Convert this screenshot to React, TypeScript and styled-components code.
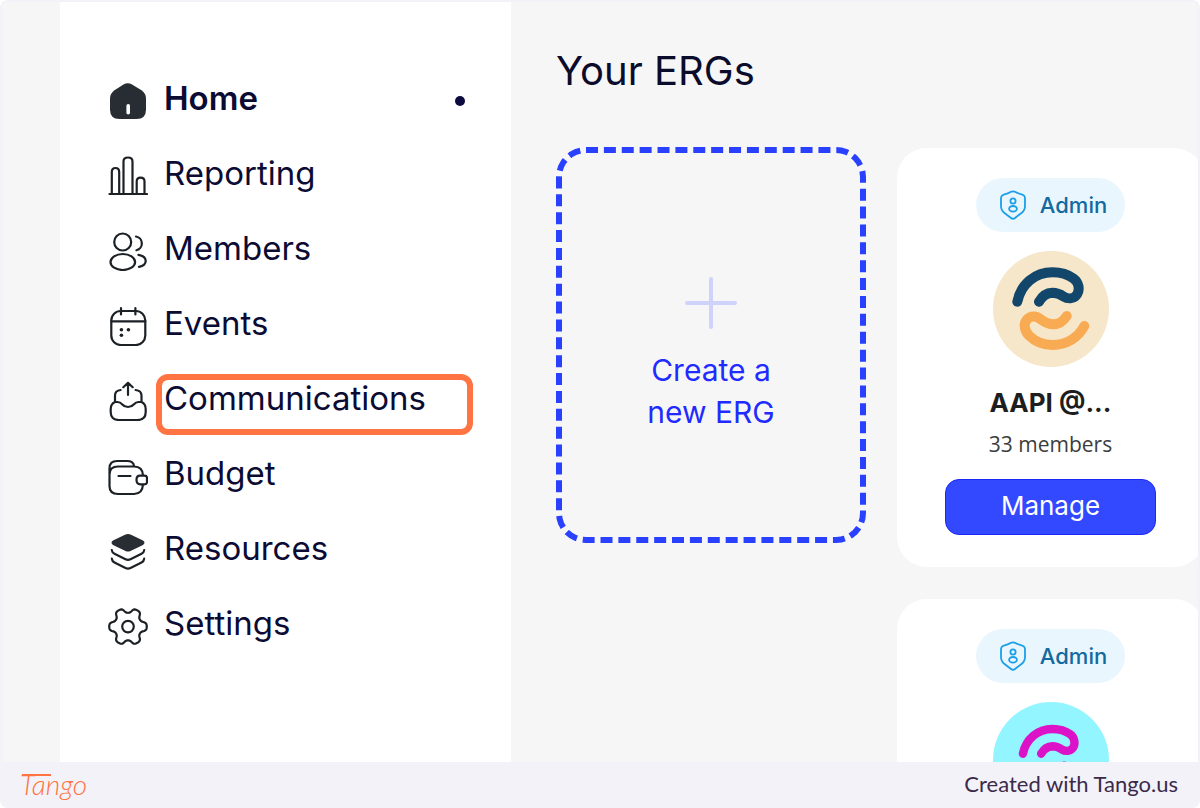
import React from "react";
import styled, { createGlobalStyle } from "styled-components";

const GlobalStyle = createGlobalStyle`
  *, *::before, *::after { box-sizing: border-box; }
  body { margin: 0; background: #ffffff; font-family: Inter, "Liberation Sans", sans-serif; }
  h1, h2, p, ul { margin: 0; padding: 0; font-weight: inherit; }
`;

const Frame = styled.div`
  display: flex;
  flex-direction: column;
  height: 100vh;
  min-height: 320px;
  border: 2px solid #f3f2f8;
  border-bottom: 0;
  border-radius: 8px;
  overflow: hidden;
  background: #f3f2f8;
`;

const Screen = styled.div`
  flex: 1;
  min-height: 0;
  display: flex;
  overflow: hidden;
  background: #f6f6f6;
  padding-left: 58px;
`;

const Sidebar = styled.nav`
  flex: 0 0 451px;
  background: #ffffff;
  padding: 62px 46px 0 48px;
`;

const NavList = styled.ul`
  list-style: none;
`;

const NavItem = styled.li`
  height: 75px;
  padding-top: 17px;
`;

const NavLink = styled.a<{ $active?: boolean }>`
  display: flex;
  align-items: center;
  gap: 16px;
  height: 40px;
  color: #0b0b33;
  font-size: 33px;
  line-height: 34px;
  font-weight: ${(p) => (p.$active ? 600 : 400)};
  text-decoration: none;
`;

const NavIcon = styled.svg`
  flex: none;
  width: 40px;
  height: 40px;
  fill: none;
  stroke: #1c2126;
  stroke-width: 2.2;
  stroke-linecap: round;
  stroke-linejoin: round;
`;

const NavLabel = styled.span`
  position: relative;
  flex: 1;
  padding-bottom: 6px;
`;

const Highlight = styled.span`
  position: absolute;
  inset: -7px -8px -14px -8px;
  border: 6px solid #ff7442;
  border-radius: 12px;
`;

const ActiveDot = styled.span`
  width: 10px;
  height: 10px;
  border-radius: 50%;
  background: #0b0b40;
`;

const Main = styled.main`
  flex: 1;
  min-width: 0;
  padding: 45px 0 0 45px;
  overflow: hidden;
`;

const Title = styled.h1`
  color: #0b0b2b;
  font-size: 40px;
  line-height: 48px;
`;

const Board = styled.div`
  display: grid;
  grid-template-columns: 310px 307px;
  align-items: start;
  gap: 31px;
  margin-top: 52px;
`;

const CreateCard = styled.button`
  display: flex;
  flex-direction: column;
  align-items: center;
  justify-content: center;
  gap: 20px;
  height: 396px;
  padding: 20px 0 0;
  border: 6px dashed #2940ff;
  border-radius: 30px;
  background: transparent;
  color: #1f2bff;
  font-family: inherit;
  font-size: 30px;
  line-height: 42px;
`;

const PlusIcon = styled.svg`
  width: 52px;
  height: 52px;
  fill: none;
  stroke: #cfd2fb;
  stroke-width: 4;
  stroke-linecap: round;
`;

const CardColumn = styled.div`
  display: flex;
  flex-direction: column;
  gap: 32px;
  padding-top: 1px;
`;

const Card = styled.section`
  display: flex;
  flex-direction: column;
  align-items: center;
  padding: 30px 0 32px;
  border-radius: 30px;
  background: #ffffff;
`;

const Badge = styled.span`
  display: flex;
  align-items: center;
  gap: 14px;
  height: 54px;
  padding: 0 18px 0 24px;
  border-radius: 27px;
  background: #eaf6fe;
  color: #136a9f;
  font-size: 22px;
  font-weight: 500;
  line-height: 28px;
`;

const ShieldSvg = styled.svg`
  width: 26px;
  height: 30px;
  fill: none;
  stroke: #1a9fe8;
  stroke-width: 1.8;
`;

const Avatar = styled.svg`
  width: 116px;
  height: 116px;
  margin-top: 19px;
  fill: none;
  stroke-width: 10;
  stroke-linecap: round;
  stroke-linejoin: round;
`;

const CardTitle = styled.h2`
  margin-top: 20px;
  color: #1e1e1e;
  font-size: 26px;
  font-weight: 700;
  line-height: 32px;
`;

const CardMeta = styled.p`
  margin-top: 11px;
  color: #3d3d3d;
  font-family: "Open Sans", sans-serif;
  font-size: 21px;
  line-height: 28px;
`;

const ManageButton = styled.button`
  width: 211px;
  height: 56px;
  margin-top: 21px;
  padding: 0 0 2px;
  border: 1px solid #1c28f5;
  border-radius: 14px;
  background: #3349ff;
  color: #ffffff;
  font-family: inherit;
  font-size: 26px;
  line-height: 32px;
`;

const Footer = styled.footer`
  flex: none;
  display: flex;
  align-items: center;
  justify-content: space-between;
  height: 46px;
  padding: 0 20px 2px 18px;
  background: #f3f2f8;
  color: #3b2a4a;
  font-family: Lato, sans-serif;
  font-size: 22px;
  line-height: 28px;
`;

const Brand = styled.a`
  position: relative;
  color: #ff7442;
  font-size: 28px;
  font-style: italic;
  font-weight: 300;
  text-decoration: none;

  &::before {
    content: "";
    position: absolute;
    top: 4px;
    left: 2px;
    width: 29px;
    height: 2px;
    background: currentColor;
  }
`;

/* Six soft teeth around the hub, one pointing right. */
const gearPath =
  Array.from({ length: 120 }, (_, i) => {
    const a = (i / 120) * Math.PI * 2;
    const r = 16.2 + 2.7 * Math.tanh(1.6 * Math.cos(6 * a) + 0.2);
    const x = (20 + r * Math.cos(a)).toFixed(2);
    const y = (20.6 + r * Math.sin(a)).toFixed(2);
    return `${i ? "L" : "M"}${x} ${y}`;
  }).join("") + "Z";

type Item = { label: string; icon: React.ReactNode; active?: boolean; marked?: boolean };

const items: Item[] = [
  {
    label: "Home",
    active: true,
    icon: (
      <>
        <path
          fill="#272d33"
          stroke="none"
          d="M15.5 3.4Q19.8 1 24 3.4L33.5 9.3Q38 12.5 38 17.5V28.5Q38 38 28.5 38H11.5Q2 38 2 28.5V17.5Q2 12.5 6.5 9.3Z"
        />
        <rect x="18.4" y="23" width="3.6" height="10.6" rx="1.8" fill="#fff" stroke="none" />
      </>
    ),
  },
  {
    label: "Reporting",
    icon: (
      <path d="M1.5 38H39M3.8 38V16Q3.8 12 7.5 12T11.2 16V38M15.5 38V5.5Q15.5 1.5 20 1.5T24.5 5.5V38M28.7 38V25.5Q28.7 21.7 32.6 21.7T36.5 25.5V38" />
    ),
  },
  {
    label: "Members",
    icon: (
      <>
        <circle cx="14.7" cy="11" r="8.5" />
        <ellipse cx="14.8" cy="31" rx="12.3" ry="8" />
        <path d="M28 5.5A7 7 0 0 1 28.5 19.2M30.5 23.8C40 25.5 40 34 31 35.8" />
      </>
    ),
  },
  {
    label: "Events",
    icon: (
      <>
        <rect x="3.3" y="5" width="34" height="34" rx="9.5" />
        <path d="M3.3 15.3H37.3M13 2V8.5M27.4 2V8.5" />
        <g fill="#1c2126" stroke="none">
          <circle cx="13.4" cy="23.7" r="1.8" />
          <circle cx="20.4" cy="23.7" r="1.8" />
          <circle cx="13.4" cy="29.2" r="1.8" />
        </g>
      </>
    ),
  },
  {
    label: "Communications",
    marked: true,
    icon: (
      <path d="M20 14V2M15.3 6.2L20 1.8L24.7 6.2M12.6 9Q7 9.5 7 14.5V20.5M27.6 9Q33.5 9.5 33.5 14.5V20.5M7 21H9.5Q12.3 21 14 23.2Q16.5 26 20 26T26 23.2Q27.8 21 30.5 21H33.5Q37.7 23 37.7 28V31Q37.7 39 29.5 39H11Q2.7 39 2.7 31V28Q2.7 23 7 21" />
    ),
  },
  {
    label: "Budget",
    icon: (
      <path d="M35 19.5Q34.7 10.5 26 10.5H10Q1.5 10.5 1.5 18.5V30Q1.5 38 10 38H26Q34.5 38 35 28.3M1.5 18V12.5Q1.5 5 9 5H19Q25.5 5 26 10M10.5 20H22.5M32 19.7H36.5Q39 19.7 39 22V26Q39 28.3 36.5 28.3H32.5Q28.5 28.3 28.5 24T32 19.7" />
    ),
  },
  {
    label: "Resources",
    icon: (
      <>
        <path
          fill="#272d33"
          stroke="none"
          d="M17.5 3.6Q20 2.4 22.5 3.6L35 9.5Q38 11.7 35 13.9L22.5 20Q20 21.2 17.5 20L5 13.9Q2 11.7 5 9.5Z"
        />
        <path d="M3.8 19Q4 21.6 6.5 22.8L17.5 28.3Q20 29.5 22.5 28.3L33.5 22.8Q36 21.6 36.2 19M3.8 27.6Q4 30.2 6.5 31.4L17.5 37Q20 38.2 22.5 37L33.5 31.4Q36 30.2 36.2 27.6" />
      </>
    ),
  },
  {
    label: "Settings",
    icon: (
      <>
        <path d={gearPath} />
        <circle cx="20" cy="20.6" r="5.8" />
      </>
    ),
  },
];

const AdminBadge = () => (
  <Badge>
    <ShieldSvg viewBox="0 0 26 30" aria-hidden="true">
      <path d="M10.5 2Q13 .8 15.5 2Q18 3.6 21.5 4.3Q25 5 25 8.5V16Q25 20.5 21.5 23L15 28Q13 29.5 11 28L4.5 23Q1 20.5 1 16V8.500Q1 5 4.500 4.300Q8 3.600 10.500 2Z" />
      <circle cx="13" cy="11" r="2.6" />
      <ellipse cx="13" cy="18.8" rx="3.9" ry="2.8" />
    </ShieldSvg>
    Admin
  </Badge>
);

type LogoProps = { ground: string; upper: string; lower: string; transform?: string };

const GroupLogo = ({ ground, upper, lower, transform }: LogoProps) => (
  <Avatar viewBox="0 0 116 116" aria-hidden="true">
    <circle cx="58" cy="58" r="58" fill={ground} />
    <g transform={transform}>
      <path
        stroke={upper}
        d="M24.3 50.7C28 33 42 21.3 59.5 21.3C68 21.3 75 23.5 80.5 27.5C86 31.5 87 39 84 43.5C80.5 48.5 74.5 48 70.5 45.5C66 42.3 63.5 41.8 59.3 41.8C53 42 49 45.5 46 50.7"
      />
      <path
        stroke={lower}
        d="M73.7 65C70 71 66 73.3 60.3 73.3C55 73.3 52 71.5 48 68.5C43.5 64.5 37.5 64.5 34 68.5C30 73 31.5 80 36 84.5C42 90.5 50 94 59.5 94C73 94 85 87 91.3 75"
      />
    </g>
  </Avatar>
);

export default function App() {
  return (
    <>
      <GlobalStyle />
      <Frame>
        <Screen>
          <Sidebar aria-label="Primary">
            <NavList>
              {items.map((item) => (
                <NavItem key={item.label}>
                  <NavLink href="#" $active={item.active} aria-current={item.active ? "page" : undefined}>
                    <NavIcon viewBox="0 0 40 40" aria-hidden="true">
                      {item.icon}
                    </NavIcon>
                    <NavLabel>
                      {item.label}
                      {item.marked && <Highlight />}
                    </NavLabel>
                    {item.active && <ActiveDot />}
                  </NavLink>
                </NavItem>
              ))}
            </NavList>
          </Sidebar>
          <Main>
            <Title>Your ERGs</Title>
            <Board>
              <CreateCard type="button">
                <PlusIcon viewBox="0 0 52 52" aria-hidden="true">
                  <path d="M26 2V50M2 26H50" />
                </PlusIcon>
                <span>
                  Create a<br />
                  new ERG
                </span>
              </CreateCard>
              <CardColumn>
                <Card>
                  <AdminBadge />
                  <GroupLogo ground="#f6e6ca" upper="#12466a" lower="#f9ab53" />
                  <CardTitle>AAPI @...</CardTitle>
                  <CardMeta>33 members</CardMeta>
                  <ManageButton type="button">Manage</ManageButton>
                </Card>
                <Card>
                  <AdminBadge />
                  <GroupLogo
                    ground="#93f5ff"
                    upper="#dc12c8"
                    lower="#dc12c8"
                    transform="translate(9.5 9.1) scale(.84)"
                  />
                </Card>
              </CardColumn>
            </Board>
          </Main>
        </Screen>
        <Footer>
          <Brand href="#">Tango</Brand>
          <span>Created with Tango.us</span>
        </Footer>
      </Frame>
    </>
  );
}
